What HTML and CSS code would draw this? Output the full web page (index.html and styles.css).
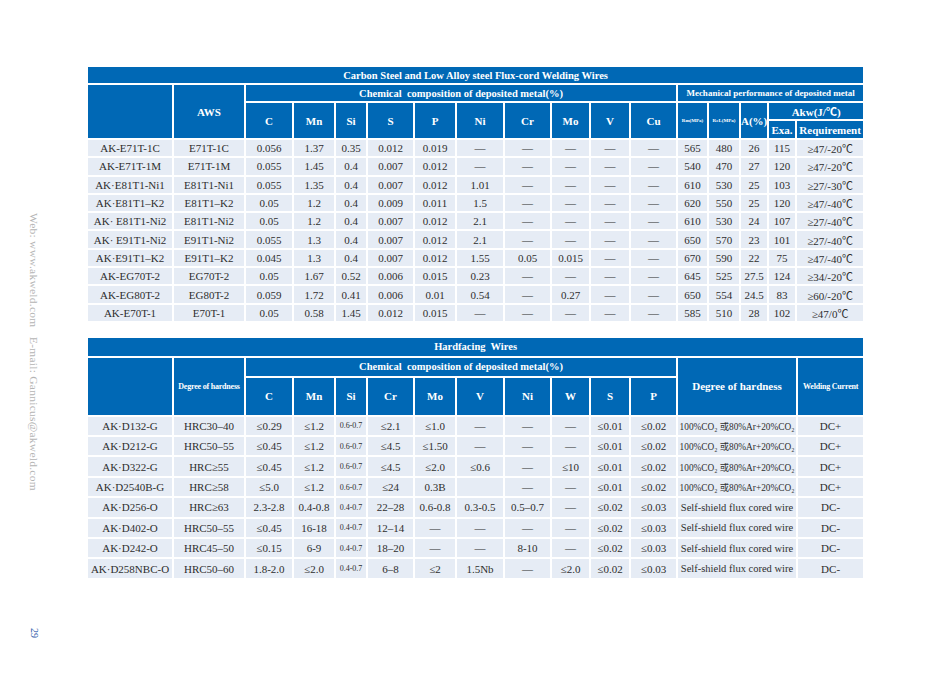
FILE: index.html
```html
<!DOCTYPE html>
<html>
<head>
<meta charset="utf-8">
<link rel="stylesheet" href="styles.css">
</head>
<body>
<div class="page">
  <aside class="side">
    <div class="side-text">Web: www.akweld.com&nbsp;&nbsp; E-mail: Gannicus@akweld.com</div>
    <div class="page-num">29</div>
  </aside>
  <main class="main">
    <table class="spec t1">
      <colgroup>
        <col style="width:86px"><col style="width:72px"><col style="width:48px"><col style="width:42px"><col style="width:32px"><col style="width:47px"><col style="width:42px"><col style="width:48px"><col style="width:47px"><col style="width:39px"><col style="width:40px"><col style="width:47px"><col style="width:31px"><col style="width:32px"><col style="width:28px"><col style="width:28px"><col style="width:68px">
      </colgroup>
      <thead>
        <tr class="h-title"><th colspan="17">Carbon Steel and Low Alloy steel Flux-cord Welding Wires</th></tr>
        <tr class="h-2">
          <th rowspan="3"></th>
          <th rowspan="3">AWS</th>
          <th colspan="10" class="chem">Chemical&nbsp; composition of deposited metal(%)</th>
          <th colspan="5" class="mech">Mechanical performance of deposited metal</th>
        </tr>
        <tr class="h-3">
          <th rowspan="2">C</th><th rowspan="2">Mn</th><th rowspan="2">Si</th><th rowspan="2">S</th><th rowspan="2">P</th><th rowspan="2">Ni</th><th rowspan="2">Cr</th><th rowspan="2">Mo</th><th rowspan="2">V</th><th rowspan="2">Cu</th>
          <th rowspan="2" class="tiny">Rm(MPa)</th><th rowspan="2" class="tiny">ReL(MPa)</th><th rowspan="2" class="amid">A(%)</th>
          <th colspan="2" class="amid">Akw(J/℃)</th>
        </tr>
        <tr class="h-4"><th>Exa.</th><th>Requirement</th></tr>
      </thead>
      <tbody>
        <tr><td>AK-E71T-1C</td><td>E71T-1C</td><td>0.056</td><td>1.37</td><td>0.35</td><td>0.012</td><td>0.019</td><td>—</td><td>—</td><td>—</td><td>—</td><td>—</td><td>565</td><td>480</td><td>26</td><td>115</td><td>≥47/-20℃</td></tr>
        <tr><td>AK-E71T-1M</td><td>E71T-1M</td><td>0.055</td><td>1.45</td><td>0.4</td><td>0.007</td><td>0.012</td><td>—</td><td>—</td><td>—</td><td>—</td><td>—</td><td>540</td><td>470</td><td>27</td><td>120</td><td>≥47/-20℃</td></tr>
        <tr><td>AK·E81T1-Ni1</td><td>E81T1-Ni1</td><td>0.055</td><td>1.35</td><td>0.4</td><td>0.007</td><td>0.012</td><td>1.01</td><td>—</td><td>—</td><td>—</td><td>—</td><td>610</td><td>530</td><td>25</td><td>103</td><td>≥27/-30℃</td></tr>
        <tr><td>AK·E81T1–K2</td><td>E81T1–K2</td><td>0.05</td><td>1.2</td><td>0.4</td><td>0.009</td><td>0.011</td><td>1.5</td><td>—</td><td>—</td><td>—</td><td>—</td><td>620</td><td>550</td><td>25</td><td>120</td><td>≥47/-40℃</td></tr>
        <tr><td>AK· E81T1-Ni2</td><td>E81T1-Ni2</td><td>0.05</td><td>1.2</td><td>0.4</td><td>0.007</td><td>0.012</td><td>2.1</td><td>—</td><td>—</td><td>—</td><td>—</td><td>610</td><td>530</td><td>24</td><td>107</td><td>≥27/-40℃</td></tr>
        <tr><td>AK· E91T1-Ni2</td><td>E91T1-Ni2</td><td>0.055</td><td>1.3</td><td>0.4</td><td>0.007</td><td>0.012</td><td>2.1</td><td>—</td><td>—</td><td>—</td><td>—</td><td>650</td><td>570</td><td>23</td><td>101</td><td>≥27/-40℃</td></tr>
        <tr><td>AK·E91T1–K2</td><td>E91T1–K2</td><td>0.045</td><td>1.3</td><td>0.4</td><td>0.007</td><td>0.012</td><td>1.55</td><td>0.05</td><td>0.015</td><td>—</td><td>—</td><td>670</td><td>590</td><td>22</td><td>75</td><td>≥47/-40℃</td></tr>
        <tr><td>AK-EG70T-2</td><td>EG70T-2</td><td>0.05</td><td>1.67</td><td>0.52</td><td>0.006</td><td>0.015</td><td>0.23</td><td>—</td><td>—</td><td>—</td><td>—</td><td>645</td><td>525</td><td>27.5</td><td>124</td><td>≥34/-20℃</td></tr>
        <tr><td>AK-EG80T-2</td><td>EG80T-2</td><td>0.059</td><td>1.72</td><td>0.41</td><td>0.006</td><td>0.01</td><td>0.54</td><td>—</td><td>0.27</td><td>—</td><td>—</td><td>650</td><td>554</td><td>24.5</td><td>83</td><td>≥60/-20℃</td></tr>
        <tr><td>AK-E70T-1</td><td>E70T-1</td><td>0.05</td><td>0.58</td><td>1.45</td><td>0.012</td><td>0.015</td><td>—</td><td>—</td><td>—</td><td>—</td><td>—</td><td>585</td><td>510</td><td>28</td><td>102</td><td>≥47/0℃</td></tr>
      </tbody>
    </table>

    <table class="spec t2">
      <colgroup>
        <col style="width:86px"><col style="width:72px"><col style="width:48px"><col style="width:42px"><col style="width:32px"><col style="width:47px"><col style="width:42px"><col style="width:48px"><col style="width:47px"><col style="width:39px"><col style="width:40px"><col style="width:47px"><col style="width:120px"><col style="width:67px">
      </colgroup>
      <thead>
        <tr class="h-title"><th colspan="14">Hardfacing&nbsp; Wires</th></tr>
        <tr class="h-2">
          <th rowspan="2"></th>
          <th rowspan="2" class="small-h">Degree of hardness</th>
          <th colspan="10" class="chem">Chemical&nbsp; composition of deposited metal(%)</th>
          <th rowspan="2">Degree of hardness</th>
          <th rowspan="2" class="small-h">Welding Current</th>
        </tr>
        <tr class="h-3">
          <th>C</th><th>Mn</th><th>Si</th><th>Cr</th><th>Mo</th><th>V</th><th>Ni</th><th>W</th><th>S</th><th>P</th>
        </tr>
      </thead>
      <tbody>
        <tr><td>AK·D132-G</td><td>HRC30–40</td><td>≤0.29</td><td>≤1.2</td><td class="sm">0.6-0.7</td><td>≤2.1</td><td>≤1.0</td><td>—</td><td>—</td><td>—</td><td>≤0.01</td><td>≤0.02</td><td class="gas">100%CO₂ 或80%Ar+20%CO₂</td><td>DC+</td></tr>
        <tr><td>AK·D212-G</td><td>HRC50–55</td><td>≤0.45</td><td>≤1.2</td><td class="sm">0.6-0.7</td><td>≤4.5</td><td>≤1.50</td><td>—</td><td>—</td><td>—</td><td>≤0.01</td><td>≤0.02</td><td class="gas">100%CO₂ 或80%Ar+20%CO₂</td><td>DC+</td></tr>
        <tr><td>AK·D322-G</td><td>HRC≥55</td><td>≤0.45</td><td>≤1.2</td><td class="sm">0.6-0.7</td><td>≤4.5</td><td>≤2.0</td><td>≤0.6</td><td>—</td><td>≤10</td><td>≤0.01</td><td>≤0.02</td><td class="gas">100%CO₂ 或80%Ar+20%CO₂</td><td>DC+</td></tr>
        <tr><td>AK·D2540B-G</td><td>HRC≥58</td><td>≤5.0</td><td>≤1.2</td><td class="sm">0.6-0.7</td><td>≤24</td><td>0.3B</td><td></td><td>—</td><td>—</td><td>≤0.01</td><td>≤0.02</td><td class="gas">100%CO₂ 或80%Ar+20%CO₂</td><td>DC+</td></tr>
        <tr><td>AK·D256-O</td><td>HRC≥63</td><td>2.3-2.8</td><td>0.4-0.8</td><td class="sm">0.4-0.7</td><td>22–28</td><td>0.6-0.8</td><td>0.3-0.5</td><td>0.5–0.7</td><td>—</td><td>≤0.02</td><td>≤0.03</td><td class="self">Self-shield flux cored wire</td><td>DC-</td></tr>
        <tr><td>AK·D402-O</td><td>HRC50–55</td><td>≤0.45</td><td>16-18</td><td class="sm">0.4-0.7</td><td>12–14</td><td>—</td><td>—</td><td>—</td><td>—</td><td>≤0.02</td><td>≤0.03</td><td class="self">Self-shield flux cored wire</td><td>DC-</td></tr>
        <tr><td>AK·D242-O</td><td>HRC45–50</td><td>≤0.15</td><td>6-9</td><td class="sm">0.4-0.7</td><td>18–20</td><td>—</td><td>—</td><td>8-10</td><td>—</td><td>≤0.02</td><td>≤0.03</td><td class="self">Self-shield flux cored wire</td><td>DC-</td></tr>
        <tr><td>AK·D258NBC-O</td><td>HRC50–60</td><td>1.8-2.0</td><td>≤2.0</td><td class="sm">0.4-0.7</td><td>6–8</td><td>≤2</td><td>1.5Nb</td><td>—</td><td>≤2.0</td><td>≤0.02</td><td>≤0.03</td><td class="self">Self-shield flux cored wire</td><td>DC-</td></tr>
      </tbody>
    </table>
  </main>
</div>
</body>
</html>
```

FILE: styles.css
```css
html, body {
  margin: 0;
  padding: 0;
  background: #ffffff;
}

body {
  font-family: "Liberation Serif", "Noto Sans CJK SC", serif;
  color: #2e2e2e;
}

.page {
  display: flex;
  width: 952px;
  height: 700px;
}

.side {
  width: 86px;
  flex: none;
  display: flex;
  flex-direction: column;
  align-items: flex-start;
  padding-top: 213px;
  padding-left: 28px;
  box-sizing: border-box;
}

.side-text {
  writing-mode: vertical-rl;
  font-size: 11.4px;
  letter-spacing: 0.3px;
  color: #b4b4b4;
  line-height: 12px;
  white-space: nowrap;
}

.page-num {
  writing-mode: vertical-rl;
  margin-top: 137px;
  font-size: 10px;
  line-height: 10px;
  color: #2c58a8;
  padding-left: 1px;
}

.main {
  padding-top: 67px;
  display: flex;
  flex-direction: column;
  gap: 13px;
}

.spec {
  width: 777px;
  table-layout: fixed;
  border-collapse: collapse;
}

.spec th,
.spec td {
  border: 2px solid #ffffff;
  padding: 0;
  text-align: center;
  vertical-align: middle;
  white-space: nowrap;
  overflow: hidden;
}

.spec th {
  background: #0068b5;
  color: #ffffff;
  font-weight: bold;
  font-size: 11px;
}

.spec td {
  background: #e6ecf5;
  font-size: 11px;
}

.spec tr.h-title th {
  font-size: 10.5px;
  border-top: 0;
}

.spec th.chem {
  font-size: 10.5px;
}

.spec th.mech {
  font-size: 9px;
}

.spec th.tiny {
  font-size: 5px;
}

.spec th.amid {
  font-size: 11px;
}

.spec th.small-h {
  font-size: 8px;
  letter-spacing: -0.2px;
}

.spec td.sm {
  font-size: 8px;
}

.spec td.gas {
  font-size: 9.3px;
}

.spec td.self {
  font-size: 10.5px;
}

/* table 1 row heights */
.t1 .h-title { height: 17px; }
.t1 .h-2 { height: 18px; }
.t1 .h-3 { height: 17px; }
.t1 .h-4 { height: 19px; }
.t1 tbody tr { height: 18.3px; }
.t1 tbody tr:last-child td { border-bottom-width: 4px; }

/* table 2 row heights */
.t2 .h-title { height: 19px; }
.t2 .h-2 { height: 20px; }
.t2 .h-3 { height: 39px; }
.t2 tbody tr { height: 20.4px; }
```
